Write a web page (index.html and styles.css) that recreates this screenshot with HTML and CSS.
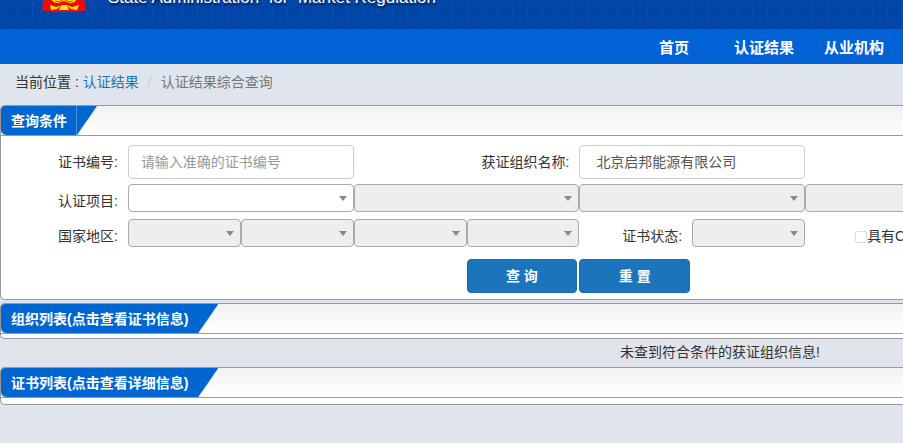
FILE: index.html
```html
<!DOCTYPE html>
<html lang="zh-CN">
<head>
    <meta charset="UTF-8">
    <meta name="viewport" content="width=device-width, initial-scale=1.0">
    <title>认证结果综合查询</title>
    <link rel="stylesheet" href="styles.css">
</head>
<body>
    <header class="banner">
        <svg class="emblem" width="46" height="13" viewBox="0 0 46 13" aria-hidden="true">
            <path fill="#ee0a08" d="M3 0H43L45 8Q45 12 38 11Q36 13 31 12H15Q10 13 8 11Q1 12 1 8Z"/>
            <path fill="#ffd91a" d="M11 0H35Q34 3 29 3L23 1L17 3Q12 3 11 0Z"/>
            <path fill="#ffe11a" d="M9 5L15 7L22 5H25L31 7L38 5L36 10L30 9L26 6L28 10H18L20 6L16 9L10 10Z"/>
            <path fill="none" stroke="#c25a05" d="M14 1Q18 3 22 0M24 0Q28 3 32 1"/>
        </svg>
        <div class="banner-text">State Administration  for  Market Regulation</div>
    </header>

    <nav class="main-nav">
        <a href="#">首页</a>
        <a href="#">认证结果</a>
        <a href="#">从业机构</a>
    </nav>

    <div class="breadcrumb">
        <span>当前位置 :</span>
        <a href="#">认证结果</a>
        <span class="separator">/</span>
        <span class="current">认证结果综合查询</span>
    </div>

    <!-- search form -->
    <section class="panel">
        <div class="panel-header">
            <h2 class="tab tab-line">查询条件</h2>
        </div>
        <form class="search-form">
            <div class="form-row">
                <label for="cert-no">证书编号:</label>
                <input type="text" class="wide" id="cert-no" placeholder="请输入准确的证书编号">
                <label for="org-name" class="org-label">获证组织名称:</label>
                <input type="text" class="wide org-name" id="org-name" value="北京启邦能源有限公司">
            </div>
            <div class="form-row select-row">
                <label for="project">认证项目:</label>
                <select class="wide" id="project"><option></option></select>
                <select class="wide" aria-label="认证项目二级" disabled><option></option></select>
                <select class="wide" aria-label="认证项目三级" disabled><option></option></select>
                <select class="wide" aria-label="认证项目四级" disabled><option></option></select>
            </div>
            <div class="form-row select-row">
                <label for="country">国家地区:</label>
                <select id="country" disabled><option></option></select>
                <select aria-label="省" disabled><option></option></select>
                <select aria-label="市" disabled><option></option></select>
                <select aria-label="区" disabled><option></option></select>
                <label for="status">证书状态:</label>
                <select id="status" disabled><option></option></select>
                <div class="check">
                    <input type="checkbox" id="has-mark">
                    <label for="has-mark">具有C</label>
                </div>
            </div>
            <div class="form-row button-row">
                <button type="button" class="btn btn-search">查 询</button>
                <button type="reset" class="btn">重 置</button>
            </div>
        </form>
    </section>

    <!-- result lists -->
    <section class="panel org-panel">
        <div class="panel-header">
            <h2 class="tab">组织列表(点击查看证书信息)</h2>
        </div>
    </section>
    <p class="empty-message">未查到符合条件的获证组织信息!</p>

    <section class="panel cert-panel">
        <div class="panel-header">
            <h2 class="tab">证书列表(点击查看详细信息)</h2>
        </div>
    </section>
</body>
</html>
```
FILE: styles.css
```css
* {
    box-sizing: border-box;
}

body {
    margin: 0;
    font-family: "Liberation Sans", "Noto Sans CJK SC", sans-serif;
    font-size: 14px;
    line-height: 20px;
    color: #333;
    background-color: #e0e4ec;
    overflow-x: hidden;
}

.banner {
    display: flex;
    align-items: flex-start;
    gap: 21px;
    height: 29px;
    padding-left: 41px;
    overflow: hidden;
    background-color: #0046a8;
    background-image:
        linear-gradient(#004fb1 1px, transparent 1px),
        linear-gradient(90deg, #004fb1 1px, transparent 1px);
    background-size: 15px 16px;
    background-position: 2px 1px;
}

.banner-text {
    margin-top: -12px;
    font-size: 17px;
    white-space: pre;
    color: #fff;
    text-shadow: 1px 2px 2px #001c50;
}

.main-nav {
    display: flex;
    justify-content: flex-end;
    height: 35px;
    padding-right: 4px;
    background-color: #0062d5;
}

.main-nav a {
    width: 90px;
    line-height: 38px;
    font-size: 15px;
    font-weight: bold;
    text-align: center;
    text-decoration: none;
    color: #fff;
}

.breadcrumb {
    display: flex;
    gap: 4px;
    padding: 8px 15px 13px;
}

.breadcrumb a {
    text-decoration: none;
    color: #1c75bc;
}

.breadcrumb .separator {
    padding: 0 5px;
    color: #ccc;
}

.breadcrumb .current {
    color: #777;
}

.panel {
    border: 1px solid #999;
    border-right: none;
    border-radius: 5px 0 0 5px;
    background-color: #fff;
    overflow: hidden;
}

.panel-header {
    display: flex;
    height: 30px;
    border-bottom: 1px solid #999;
    background: linear-gradient(#f1f1f1, #fff);
}

.tab {
    margin: 0;
    padding: 0 30px 0 10px;
    font-size: 14px;
    font-weight: bold;
    line-height: 30px;
    color: #fff;
    background-color: #0066cf;
    border-radius: 0 0 0 5px;
    clip-path: polygon(0 0, 100% 0, calc(100% - 20px) 100%, 0 100%);
}

.tab-line {
    background-image: linear-gradient(#4a90dc, #4a90dc);
    background-size: 1px 100%;
    background-position: right 20px top;
    background-repeat: no-repeat;
}

.search-form {
    padding: 9px 0 6px 14px;
}

/* eight columns fill the window, wider rows run on past its edge */
.form-row {
    display: grid;
    grid-template-columns: repeat(10, 12.5vw);
    height: 34px;
    margin-bottom: 5px;
}

.form-row label {
    padding-right: 10px;
    line-height: 34px;
    text-align: right;
}

.form-row .wide {
    grid-column: span 2;
}

.form-row .org-label {
    grid-column: 5;
    white-space: nowrap;
}

.form-row input[type="text"] {
    height: 34px;
    padding: 6px 12px;
    border: 1px solid #ccc;
    border-radius: 4px;
    font: inherit;
    color: #555;
    background-color: #fff;
}

.form-row input.org-name[type="text"] {
    padding: 5px 16px 7px;
}

.form-row input::placeholder {
    color: #999;
    opacity: 1;
}

.select-row {
    height: 28px;
    margin-bottom: 7px;
}

.form-row select {
    width: 100%;
    height: 28px;
    border: 1px solid #aaa;
    border-radius: 4px;
    appearance: none;
    background: #fff url("data:image/svg+xml,%3Csvg xmlns='http://www.w3.org/2000/svg' width='8' height='5'%3E%3Cpath fill='%23888' d='M0 0H8L4 5Z'/%3E%3C/svg%3E") no-repeat right 6px center;
}

.form-row select:disabled {
    background-color: #eee;
    opacity: 1;
}

.check {
    display: flex;
    padding-left: 50px;
    white-space: nowrap;
}

.check input {
    width: 12px;
    height: 12px;
    margin: 12px 0 0;
    border: 1px solid #ddd;
    border-radius: 2px;
    appearance: none;
    background-color: #fff;
}

.check label {
    padding: 0;
}

.button-row {
    margin: 12px 0 0;
}

.btn {
    margin-right: 2px;
    border: 1px solid #1a69a9;
    border-radius: 4px;
    font: inherit;
    font-weight: bold;
    color: #fff;
    background-color: #1c75bc;
    cursor: pointer;
}

.btn-search {
    grid-column: 5;
}

.org-panel {
    margin-top: 3px;
    padding-bottom: 4px;
}

.empty-message {
    margin: 0;
    padding: 3px 83px 5px 0;
    text-align: right;
}

.cert-panel {
    padding-bottom: 6px;
}
```
